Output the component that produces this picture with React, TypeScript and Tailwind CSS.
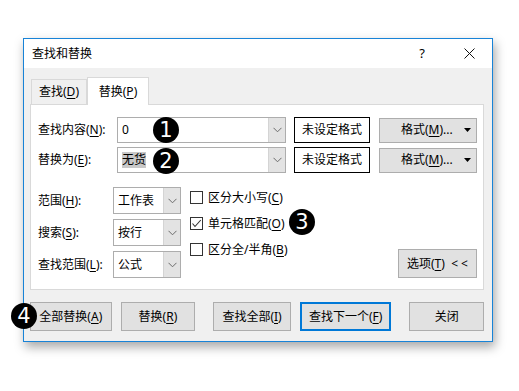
import React from "react";

const U = ({ c }: { c: string }) => (
  <span className="underline decoration-1 underline-offset-[2px]">{c}</span>
);

const Chevron = () => (
  <svg width="9" height="6" viewBox="0 0 9 6">
    <polyline points="0.5,0.8 4.5,4.8 8.5,0.8" fill="none" stroke="#6b6b6b" strokeWidth="1" />
  </svg>
);

const Badge = ({ n, className }: { n: string; className: string }) => (
  <div
    className={
      "absolute w-[26px] h-[26px] rounded-full bg-black text-white flex items-center justify-center text-[21px] leading-none font-['DejaVu_Sans',sans-serif] " +
      className
    }
  >
    {n}
  </div>
);

function Combo({
  w,
  h,
  children,
}: {
  w: string;
  h: string;
  children: React.ReactNode;
}) {
  return (
    <div className={"flex border border-[#adadad] bg-white " + w + " " + h}>
      <div className="flex-1 flex items-center pl-[4px]">{children}</div>
      <div className="w-[17px] bg-[#e3e3e3] border-l border-[#d4d4d4] flex items-center justify-center">
        <Chevron />
      </div>
    </div>
  );
}

function Check({ checked, children }: { checked?: boolean; children: React.ReactNode }) {
  return (
    <div className="flex items-center h-[13px]">
      <div className="w-[13px] h-[13px] border border-[#333333] bg-white flex items-center justify-center">
        {checked && (
          <svg width="11" height="11" viewBox="0 0 11 11">
            <polyline points="1.5,5.5 4,8.5 9.8,2" fill="none" stroke="#333333" strokeWidth="1.1" />
          </svg>
        )}
      </div>
      <div className="ml-[5px] leading-none whitespace-nowrap">{children}</div>
    </div>
  );
}

function Btn({
  w,
  children,
  primary,
  ml,
}: {
  w: string;
  children: React.ReactNode;
  primary?: boolean;
  ml?: string;
}) {
  return (
    <div
      className={
        "h-[29px] flex items-center justify-center bg-[#e1e1e1] whitespace-nowrap " +
        w +
        " " +
        (ml || "") +
        " " +
        (primary ? "border-2 border-[#0078d7]" : "border border-[#adadad]")
      }
    >
      {children}
    </div>
  );
}

export default function App() {
  return (
    <div className="relative w-[519px] h-[391px] bg-white pt-[38px] pl-[23px] text-[12px] text-black font-['Noto_Sans','Noto_Sans_CJK_SC',sans-serif] leading-none">
      <div className="w-[470px] h-[304px] border border-[#1883d7] flex flex-col shadow-[2px_5px_10px_rgba(0,0,0,0.35)]">
        {/* title bar */}
        <div className="h-[29px] bg-white flex items-center pl-[8px] shrink-0">
          <span>查找和替换</span>
          <span className="ml-auto text-[13px] mr-[39px]">?</span>
          <svg width="11" height="11" viewBox="0 0 11 11" className="mr-[17px]">
            <path d="M0.5 0.5 L10.5 10.5 M10.5 0.5 L0.5 10.5" stroke="#111" strokeWidth="1" />
          </svg>
        </div>
        {/* body */}
        <div className="flex-1 bg-[#f0f0f0] pt-[9px] pl-[6px] pr-[8px] pb-[10px] flex flex-col">
          {/* tabs */}
          <div className="h-[27px] flex items-end">
            <div className="ml-[1px] w-[56px] h-[25px] border border-b-0 border-[#d9d9d9] bg-[#f0f0f0] flex items-center justify-center">
              <span>
                查找(<U c="D" />)
              </span>
            </div>
            <div className="relative z-10 -mb-px w-[62px] h-[28px] border border-b-0 border-[#d9d9d9] bg-white flex items-center justify-center">
              <span>
                替换(<U c="P" />)
              </span>
            </div>
          </div>
          {/* panel */}
          <div className="h-[186px] border border-[#d9d9d9] bg-white pt-[12px] pl-[7px] pr-[6px]">
            <div className="flex items-center h-[26px]">
              <div className="w-[79px]">
                查找内容(<U c="N" />):
              </div>
              <Combo w="w-[169px]" h="h-[26px]">
                <span>0</span>
              </Combo>
              <div className="ml-[8px] w-[76px] h-[26px] border border-black bg-white flex items-center justify-center">
                未设定格式
              </div>
              <div className="ml-[9px] w-[98px] h-[25px] border border-[#adadad] bg-[#e1e1e1] flex items-center pl-[21px]">
                <span>
                  格式(<U c="M" />)...
                </span>
                <svg width="7" height="4" viewBox="0 0 7 4" className="ml-auto mr-[5px]">
                  <polygon points="0,0 7,0 3.5,4" fill="#000" />
                </svg>
              </div>
            </div>
            <div className="flex items-center h-[26px] mt-[4px]">
              <div className="w-[79px]">
                替换为(<U c="E" />):
              </div>
              <Combo w="w-[169px]" h="h-[26px]">
                <span className="bg-[#c8c8c8] py-[2px]">无货</span>
              </Combo>
              <div className="ml-[8px] w-[76px] h-[26px] border border-black bg-white flex items-center justify-center">
                未设定格式
              </div>
              <div className="ml-[9px] w-[98px] h-[25px] border border-[#adadad] bg-[#e1e1e1] flex items-center pl-[21px]">
                <span>
                  格式(<U c="M" />)...
                </span>
                <svg width="7" height="4" viewBox="0 0 7 4" className="ml-auto mr-[5px]">
                  <polygon points="0,0 7,0 3.5,4" fill="#000" />
                </svg>
              </div>
            </div>
            {/* lower */}
            <div className="mt-[14px] flex items-end">
              <div className="flex flex-col gap-[5px]">
                <div className="flex items-center">
                  <div className="w-[75px]">
                    范围(<U c="H" />):
                  </div>
                  <Combo w="w-[68px]" h="h-[27px]">
                    <span>工作表</span>
                  </Combo>
                </div>
                <div className="flex items-center">
                  <div className="w-[75px]">
                    搜索(<U c="S" />):
                  </div>
                  <Combo w="w-[68px]" h="h-[27px]">
                    <span>按行</span>
                  </Combo>
                </div>
                <div className="flex items-center">
                  <div className="w-[75px]">
                    查找范围(<U c="L" />):
                  </div>
                  <Combo w="w-[68px]" h="h-[27px]">
                    <span>公式</span>
                  </Combo>
                </div>
              </div>
              <div className="self-start ml-[9px] mt-[4px] flex flex-col gap-[13px]">
                <Check>
                  区分大小写(<U c="C" />)
                </Check>
                <Check checked>
                  单元格匹配(<U c="O" />)
                </Check>
                <Check>
                  区分全/半角(<U c="B" />)
                </Check>
              </div>
              <div className="ml-auto w-[79px] h-[29px] border border-[#adadad] bg-[#e1e1e1] flex items-center justify-center whitespace-nowrap">
                <span>
                  选项(<U c="T" />)&nbsp;&nbsp;&lt; &lt;
                </span>
              </div>
            </div>
          </div>
          {/* buttons */}
          <div className="mt-[12px] flex">
            <Btn w="w-[82px]">
              <span>
                全部替换(<U c="A" />)
              </span>
            </Btn>
            <Btn w="w-[75px]" ml="ml-[9px]">
              <span>
                替换(<U c="R" />)
              </span>
            </Btn>
            <Btn w="w-[78px]" ml="ml-[18px]">
              <span>
                查找全部(<U c="I" />)
              </span>
            </Btn>
            <Btn w="w-[92px]" ml="ml-[9px]" primary>
              <span>
                查找下一个(<U c="F" />)
              </span>
            </Btn>
            <Btn w="w-[75px]" ml="ml-[18px]">
              <span>关闭</span>
            </Btn>
          </div>
        </div>
      </div>
      <Badge n="1" className="left-[153px] top-[117px]" />
      <Badge n="2" className="left-[153px] top-[148px]" />
      <Badge n="3" className="left-[289px] top-[209px]" />
      <Badge n="4" className="left-[11px] top-[303px]" />
    </div>
  );
}
